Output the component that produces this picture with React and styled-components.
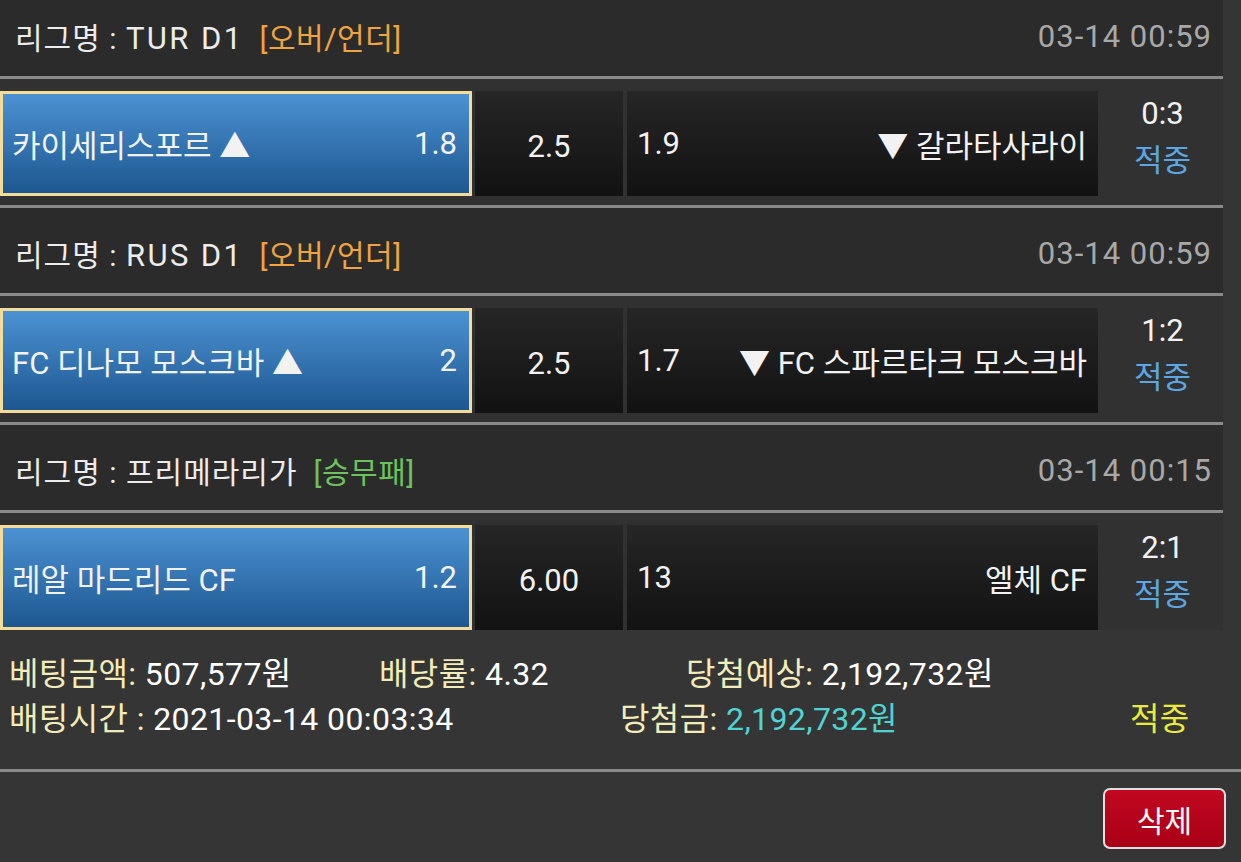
import React from 'react';
import styled, { createGlobalStyle } from 'styled-components';

const GlobalStyle = createGlobalStyle`
  html, body {
    margin: 0;
    padding: 0;
    background: #353535;
  }
  body {
    font-family: Roboto, "Noto Sans CJK KR", sans-serif;
    color: #f2f2f2;
    overflow: hidden;
  }
`;

/* Estilos */
const Page = styled.div`
  width: 1241px;
  margin-top: -9px;
`;

const Block = styled.div`
  width: 1223px;
`;

const Header = styled.div`
  display: flex;
  align-items: center;
  height: 88px;
  padding: 5px 11px 0 15px;
  box-sizing: border-box;
  background: #2b2b2b;
  border-bottom: 3px solid #8a8a8a;
  font-size: 30px;
`;

const League = styled.span`
  color: #ececec;
  letter-spacing: 1px;
`;

const LeagueName = styled.span`
  font-size: ${props => (props.latin ? 31 : 30)}px;
  letter-spacing: ${props => (props.latin ? 2.4 : 1)}px;
`;

const Kind = styled.span`
  margin-left: 16px;
  color: ${props => props.color};
  letter-spacing: 0.5px;
`;

const Date = styled.span`
  margin-left: auto;
  color: #a8a8a8;
  font-size: 31px;
  letter-spacing: 1px;
`;

const Row = styled.div`
  display: flex;
  height: 105px;
  padding-top: 12px;
  padding-bottom: ${props => (props.last ? 0 : 9)}px;
  border-bottom: ${props => (props.last ? 'none' : '3px solid #8a8a8a')};
  background: #313131;
`;

const Cell = styled.div`
  display: flex;
  align-items: center;
  box-sizing: border-box;
  background: linear-gradient(#262626, #121212);
  font-size: 31px;
`;

const Home = styled(Cell)`
  width: 472px;
  justify-content: space-between;
  padding: 0 12px 0 9px;
  border: 3px solid #f3dc9a;
  background: linear-gradient(#4c92d3, #1d5790);
`;

const Draw = styled(Cell)`
  width: 148px;
  margin-left: 3px;
  justify-content: center;
  padding-top: 5px;
`;

const Away = styled(Cell)`
  width: 471px;
  margin-left: 4px;
  justify-content: space-between;
  padding: 0 11px 0 10px;
`;

const Score = styled.div`
  flex: 1;
  display: flex;
  flex-direction: column;
  align-items: center;
  gap: 11px;
  padding: 5px 0 0 4px;
  font-size: 31px;
  line-height: 36px;
`;

const Result = styled.span`
  color: #5aa7e4;
`;

const Summary = styled.div`
  display: flex;
  flex-direction: column;
  gap: 11px;
  padding: 27px 0 33px 9px;
  border-bottom: 3px solid #8a8a8a;
  font-size: 32px;
  line-height: 34px;
  letter-spacing: 0.4px;
`;

const Line = styled.div`
  display: flex;
`;

const Item = styled.span`
  width: ${props => props.w}px;
  flex-shrink: 0;
  color: #ffffff;
  white-space: nowrap;
`;

const Label = styled.span`
  color: #f2ecb8;
`;

const Money = styled.span`
  color: #4fd3d3;
`;

const Hit = styled.span`
  color: #eaea3c;
`;

const Footer = styled.div`
  display: flex;
  justify-content: flex-end;
  padding: 16px 15px 0 0;
`;

const DeleteButton = styled.button`
  width: 123px;
  height: 61px;
  border: 2px solid #e6dede;
  border-radius: 7px;
  background: linear-gradient(#c10820, #a90017);
  color: #ffffff;
  font-family: Roboto, "Noto Sans CJK KR", sans-serif;
  font-size: 30px;
  cursor: pointer;
`;

const games = [
  {
    league: 'TUR D1',
    latin: true,
    kind: '[오버/언더]',
    kindColor: '#f0a33e',
    date: '03-14 00:59',
    home: '카이세리스포르 ▲',
    homeOdds: '1.8',
    draw: '2.5',
    awayOdds: '1.9',
    away: '▼ 갈라타사라이',
    score: '0:3',
  },
  {
    league: 'RUS D1',
    latin: true,
    kind: '[오버/언더]',
    kindColor: '#f0a33e',
    date: '03-14 00:59',
    home: 'FC 디나모 모스크바 ▲',
    homeOdds: '2',
    draw: '2.5',
    awayOdds: '1.7',
    away: '▼ FC 스파르타크 모스크바',
    score: '1:2',
  },
  {
    league: '프리메라리가',
    latin: false,
    kind: '[승무패]',
    kindColor: '#6cc35c',
    date: '03-14 00:15',
    home: '레알 마드리드 CF',
    homeOdds: '1.2',
    draw: '6.00',
    awayOdds: '13',
    away: '엘체 CF',
    score: '2:1',
  },
];

/* Componentes */
const Game = ({ game, last }) => (
  <Block>
    <Header>
      <League>
        리그명 : <LeagueName latin={game.latin}>{game.league}</LeagueName>
      </League>
      <Kind color={game.kindColor}>{game.kind}</Kind>
      <Date>{game.date}</Date>
    </Header>
    <Row last={last}>
      <Home>
        <span>{game.home}</span>
        <span>{game.homeOdds}</span>
      </Home>
      <Draw>{game.draw}</Draw>
      <Away>
        <span>{game.awayOdds}</span>
        <span>{game.away}</span>
      </Away>
      <Score>
        <span>{game.score}</span>
        <Result>적중</Result>
      </Score>
    </Row>
  </Block>
);

const App = () => (
  <Page>
    <GlobalStyle />
    {games.map((game, i) => (
      <Game key={i} game={game} last={i === games.length - 1} />
    ))}
    <Summary>
      <Line>
        <Item w={370}><Label>베팅금액:</Label> 507,577원</Item>
        <Item w={307}><Label>배당률:</Label> 4.32</Item>
        <Item w={400}><Label>당첨예상:</Label> 2,192,732원</Item>
      </Line>
      <Line>
        <Item w={611}><Label>배팅시간 :</Label> 2021-03-14 00:03:34</Item>
        <Item w={510}><Label>당첨금:</Label> <Money>2,192,732원</Money></Item>
        <Item w={100}><Hit>적중</Hit></Item>
      </Line>
    </Summary>
    <Footer>
      <DeleteButton>삭제</DeleteButton>
    </Footer>
  </Page>
);

export default App;
